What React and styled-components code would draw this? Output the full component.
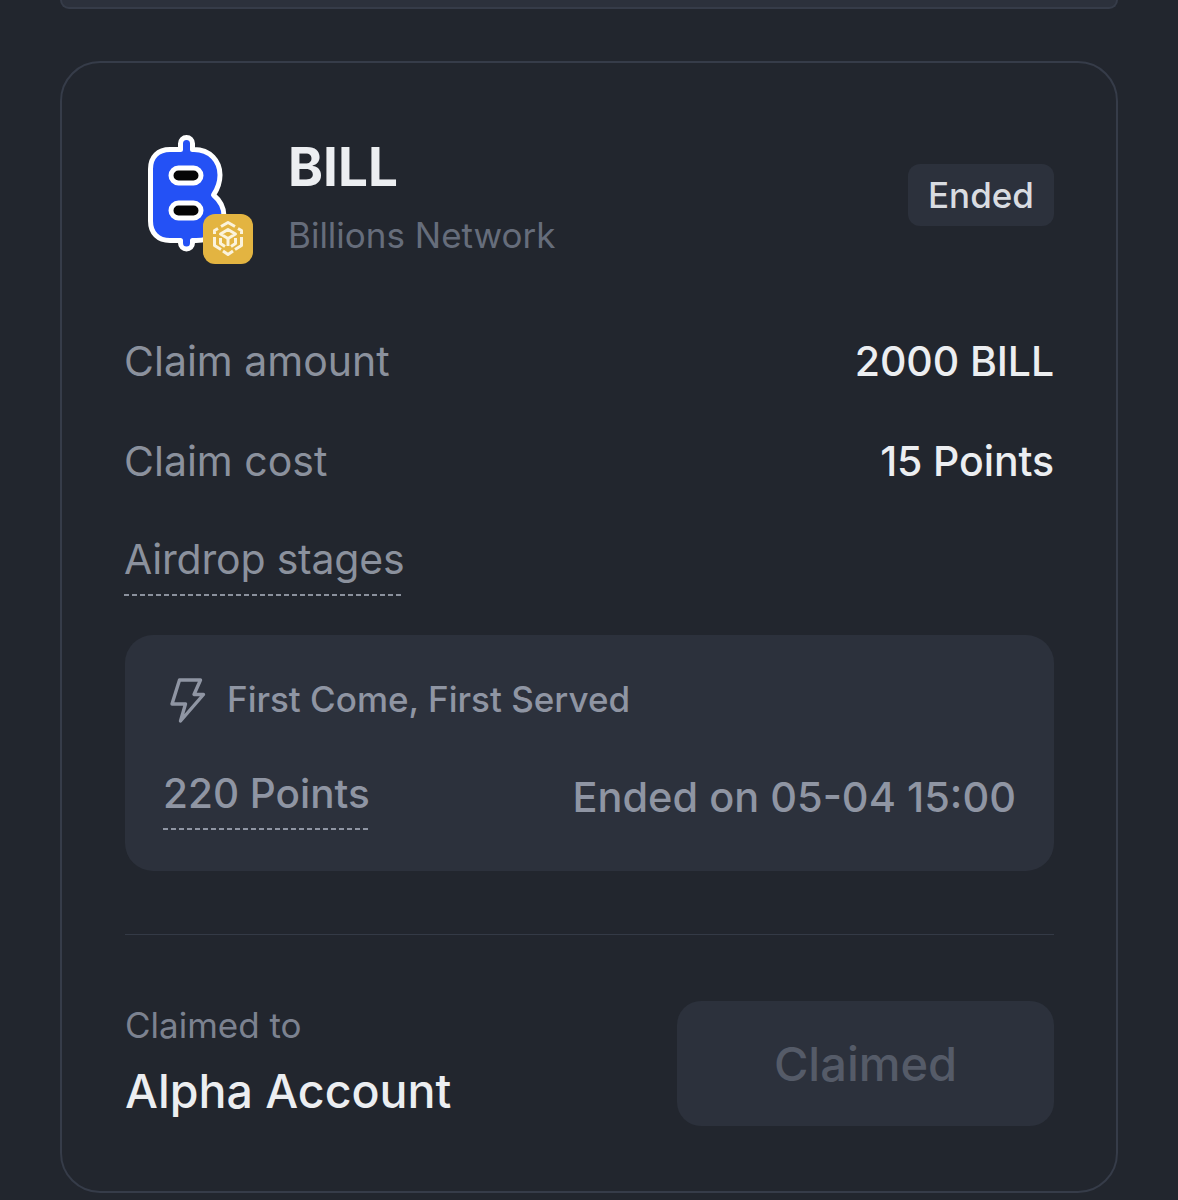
import styled, { createGlobalStyle } from "styled-components";

const GlobalStyle = createGlobalStyle`
  html, body {
    margin: 0;
    padding: 0;
    background-color: #22262e;
  }
  * {
    box-sizing: border-box;
  }
`;

const Page = styled.div`
  width: 1178px;
  height: 1200px;
  overflow: hidden;
  padding-inline: 60px;
  background-color: #22262e;
  font-family: "Inter", "Lato", sans-serif;
  display: flex;
  flex-direction: column;
  gap: 52px;
`;
const PrevCard = styled.div`
  height: 9px;
  flex-shrink: 0;
  background-color: #2c313c;
  border: 2px solid #363c49;
  border-top: none;
  border-radius: 0 0 24px 24px;
`;
const Card = styled.section`
  flex-shrink: 0;
  height: 1132px;
  border: 2px solid #363c49;
  border-radius: 40px;
  padding: 72px 62px 0 63px;
  display: flex;
  flex-direction: column;
`;
const Header = styled.header`
  display: flex;
  align-items: flex-start;
  justify-content: space-between;
  height: 129px;
`;
const Token = styled.div`
  display: flex;
  align-items: flex-start;
  gap: 36px;
`;
const LogoWrap = styled.div`
  position: relative;
  width: 105px;
  height: 129px;
  margin-left: 23px;
`;
const Badge = styled.div`
  position: absolute;
  left: 55px;
  top: 79px;
  width: 50px;
  height: 50px;
  border-radius: 12px;
  background-color: #e3b441;
  display: flex;
  align-items: center;
  justify-content: center;
`;
const TokenName = styled.h2`
  margin: 2px 0 0 -1px;
  font-size: 53px;
  line-height: 60px;
  font-weight: 700;
  color: #eceef1;
`;
const TokenSub = styled.p`
  margin: 16px 0 0 -1px;
  font-size: 35px;
  line-height: 44px;
  color: #666d7b;
`;
const Status = styled.span`
  display: inline-flex;
  align-items: center;
  justify-content: center;
  width: 146px;
  height: 62px;
  margin-top: 29px;
  border-radius: 12px;
  background-color: #2c313c;
  color: #d9dce1;
  font-size: 35px;
  font-weight: 500;
`;
const Row = styled.div`
  display: flex;
  align-items: center;
  justify-content: space-between;
  height: 60px;
  margin-top: ${(p) => p.$top}px;
`;
const Label = styled.span`
  font-size: 41px;
  margin-left: -1px;
  color: #8b919d;
`;
const Value = styled.span`
  font-size: 41px;
  font-weight: 500;
  letter-spacing: -0.1px;
  color: #eceef1;
`;
const Dashed = styled.span`
  display: inline-block;
  padding-bottom: ${(p) => p.$gap}px;
  background-image: linear-gradient(to right, currentColor 5.5px, transparent 5.5px);
  background-size: 8px 2px;
  background-repeat: repeat-x;
  background-position: left bottom;
`;
const StagesLabel = styled.div`
  margin-top: 43px;
  height: 60px;
  line-height: 50px;
  font-size: 41px;
  letter-spacing: -0.2px;
  margin-left: -1px;
  color: #8b919d;
`;
const StageBox = styled.div`
  margin-top: 41px;
  height: 236px;
  border-radius: 28px;
  background-color: #2c313c;
  padding: 40px 38px 0;
  display: flex;
  flex-direction: column;
`;
const StageTitle = styled.div`
  display: flex;
  align-items: center;
  gap: 21px;
  margin-left: 7px;
  height: 48px;
  font-size: 35px;
  font-weight: 500;
  color: #8f95a3;
  & svg {
    margin-top: 3px;
  }
`;
const StageRow = styled.div`
  display: flex;
  align-items: flex-start;
  justify-content: space-between;
  margin-top: 46px;
  font-size: 40.5px;
  color: #8f95a3;
  font-weight: 500;
`;
const EndedOn = styled.span`
  margin-top: 3px;
  font-size: 41.5px;
`;
const Divider = styled.hr`
  margin: 63px 0 0;
  border: none;
  border-top: 1px solid #343a46;
`;
const Footer = styled.footer`
  display: flex;
  align-items: center;
  justify-content: space-between;
  margin-top: 66px;
`;
const ClaimedLabel = styled.div`
  font-size: 35px;
  line-height: 44px;
  color: #7c8290;
`;
const Account = styled.div`
  margin-top: 16px;
  margin-bottom: 6px;
  font-size: 46.5px;
  line-height: 56px;
  font-weight: 500;
  color: #eceef1;
`;
const ClaimedButton = styled.button`
  width: 377px;
  height: 125px;
  border: none;
  border-radius: 24px;
  background-color: #2c313c;
  color: #555b68;
  font-family: inherit;
  font-size: 47px;
  font-weight: 500;
`;

function BillLogo() {
  return (
    <svg width="84" height="122" viewBox="0 0 84 122" fill="none">
      <path
        d="M32.5 14.5 V8.5 a6 6 0 0 1 12 0 V14.5 H46 C62 14.5 72 26 72 40 C72 48 69.5 54 65.5 60 C71.5 65 76 72 76 81 C76 96 64 105.5 48 105.5 H44.5 V108 a6 6 0 0 1 -12 0 V105.5 H22 C10 105.5 2.5 98 2.5 86 V34 C2.5 22 10 14.5 22 14.5 Z"
        fill="#2451f5"
        stroke="#fff"
        strokeWidth="5"
        strokeLinejoin="round"
      />
      <rect x="23" y="33" width="30" height="15" rx="7.5" fill="#050505" stroke="#fff" strokeWidth="5" />
      <rect x="23" y="68" width="30" height="15" rx="7.5" fill="#050505" stroke="#fff" strokeWidth="5" />
    </svg>
  );
}

function BnbCube() {
  return (
    <svg width="34" height="38" viewBox="0 0 34 38" fill="none" stroke="#fbf3dc" strokeWidth="3" strokeLinejoin="round">
      <path d="M10 6.5 L17 2.5 L24 6.5" />
      <path d="M3.5 14 V10.5 L7 8.5 M30.5 14 V10.5 L27 8.5" />
      <path d="M9.5 14 L17 9.5 L24.5 14 L17 18.5 Z" />
      <path d="M17 18.5 V26" />
      <path d="M3.5 17 V25.5 L10 29.5 M30.5 17 V25.5 L24 29.5" />
      <path d="M9.5 18 V23.5 L14 26.5 M24.5 18 V23.5 L20 26.5" />
      <path d="M12 31 L17 34.5 L22 31" />
    </svg>
  );
}

function BoltIcon() {
  return (
    <svg width="36" height="46" viewBox="0 0 36 46" fill="none">
      <path
        d="M9.5 2 H30.5 L24 16.5 H33.5 L10.5 43 L15.5 26 H2 Z"
        stroke="#8f95a3"
        strokeWidth="3.4"
        strokeLinejoin="round"
      />
    </svg>
  );
}

export default function App() {
  return (
    <Page>
      <GlobalStyle />
      <PrevCard />
      <Card>
        <Header>
          <Token>
            <LogoWrap>
              <BillLogo />
              <Badge>
                <BnbCube />
              </Badge>
            </LogoWrap>
            <div>
              <TokenName>BILL</TokenName>
              <TokenSub>Billions Network</TokenSub>
            </div>
          </Token>
          <Status>Ended</Status>
        </Header>
        <Row $top={67}>
          <Label>Claim amount</Label>
          <Value>2000 BILL</Value>
        </Row>
        <Row $top={40}>
          <Label>Claim cost</Label>
          <Value>15 Points</Value>
        </Row>
        <StagesLabel>
          <Dashed $gap={12}>Airdrop stages</Dashed>
        </StagesLabel>
        <StageBox>
          <StageTitle>
            <BoltIcon />
            First Come, First Served
          </StageTitle>
          <StageRow>
            <Dashed $gap={12}>220 Points</Dashed>
            <EndedOn>Ended on 05-04 15:00</EndedOn>
          </StageRow>
        </StageBox>
        <Divider />
        <Footer>
          <div>
            <ClaimedLabel>Claimed to</ClaimedLabel>
            <Account>Alpha Account</Account>
          </div>
          <ClaimedButton disabled>Claimed</ClaimedButton>
        </Footer>
      </Card>
    </Page>
  );
}
